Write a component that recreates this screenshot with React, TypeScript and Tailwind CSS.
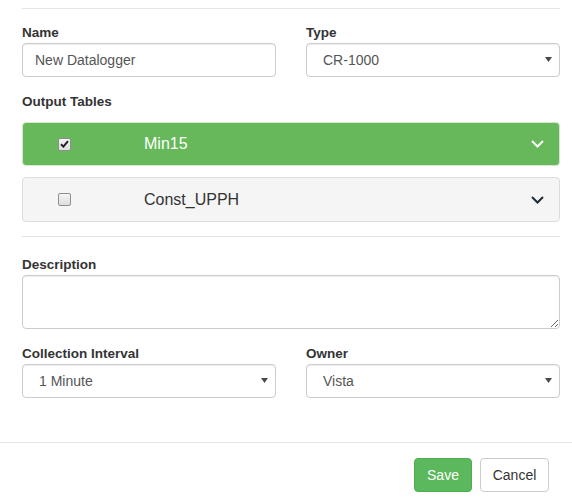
import React from "react";

const labelClass = "block text-[13.5px] font-bold leading-[20px] text-[#333]";
const controlClass =
  "h-[34px] w-full rounded-[4px] border border-[#ccc] bg-white text-[14px] text-[#555] shadow-[inset_0_1px_1px_rgba(0,0,0,0.075)] outline-none";

function FakeCheckbox({ checked }: { checked: boolean }) {
  return (
    <span className="flex h-[13px] w-[13px] items-center justify-center rounded-[2px] border border-[#8e8e8e] bg-gradient-to-b from-[#f4f4f4] to-[#dedede]">
      {checked && (
        <svg width="9" height="8" viewBox="0 0 9 8">
          <path d="M1 4.2 L3.4 6.6 L8 1.2" fill="none" stroke="#222" strokeWidth="2" />
        </svg>
      )}
    </span>
  );
}

function Chevron({ color }: { color: string }) {
  return (
    <svg width="13" height="8" viewBox="0 0 13 8">
      <path d="M1 1 L6.5 6.5 L12 1" fill="none" stroke={color} strokeWidth="2" />
    </svg>
  );
}

function TablePanel({ name, active }: { name: string; active: boolean }) {
  return (
    <div
      className={`flex items-center rounded-[4px] border ${
        active
          ? "h-[44px] border-[#d7e6d2] bg-[#67b85a] text-white"
          : "h-[45px] border-[#ddd] bg-[#f5f5f5] text-[#333]"
      }`}
    >
      <div className="flex w-[121px] pl-[35px]">
        <FakeCheckbox checked={active} />
      </div>
      <span className="flex-1 text-[16px]">{name}</span>
      <div className="pr-[15px]">
        <Chevron color={active ? "#ffffff" : "#1d2b3a"} />
      </div>
    </div>
  );
}

function SelectBox({ value, options }: { value: string; options: string[] }) {
  return (
    <div className="relative">
      <select defaultValue={value} className={`${controlClass} appearance-none pl-[16px] pr-[28px]`}>
        {options.map((o) => (
          <option key={o}>{o}</option>
        ))}
      </select>
      <svg
        className="pointer-events-none absolute right-[8px] top-[14px]"
        width="7"
        height="5"
        viewBox="0 0 7 5"
      >
        <path d="M0 0 L7 0 L3.5 5 Z" fill="#4a4a4a" />
      </svg>
    </div>
  );
}

export default function App() {
  return (
    <div className="h-[499px] w-[572px] overflow-hidden bg-white font-['Liberation_Sans',Arial,sans-serif] text-[#333]">
      <div className="pl-[22px] pr-[12px] pt-[8px]">
        <div className="h-px bg-[#e5e5e5]" />

        <div className="mt-[14px] grid grid-cols-2 gap-x-[30px]">
          <div>
            <label className={labelClass}>Name</label>
            <input className={`${controlClass} px-[12px]`} defaultValue="New Datalogger" />
          </div>
          <div>
            <label className={labelClass}>Type</label>
            <SelectBox value="CR-1000" options={["CR-1000", "CR-800", "CR-3000"]} />
          </div>
        </div>

        <label className={`${labelClass} mt-[15px]`}>Output Tables</label>
        <div className="mt-[10px] flex flex-col gap-[11px]">
          <TablePanel name="Min15" active />
          <TablePanel name="Const_UPPH" active={false} />
        </div>

        <div className="mt-[14px] h-px bg-[#e5e5e5]" />

        <label className={`${labelClass} mt-[18px]`}>Description</label>
        <textarea className={`${controlClass} block h-[54px] px-[12px] py-[6px]`} />

        <div className="mt-[15px] grid grid-cols-2 gap-x-[30px]">
          <div>
            <label className={labelClass}>Collection Interval</label>
            <SelectBox value="1 Minute" options={["1 Minute", "5 Minutes", "15 Minutes", "1 Hour"]} />
          </div>
          <div>
            <label className={labelClass}>Owner</label>
            <SelectBox value="Vista" options={["Vista", "Admin"]} />
          </div>
        </div>
      </div>

      <div className="mt-[44px] flex justify-end gap-[8px] border-t border-[#e5e5e5] pr-[23px] pt-[15px]">
        <button className="h-[34px] w-[58px] rounded-[4px] border border-[#4cae4c] bg-[#5cb85c] text-[14px] text-white">
          Save
        </button>
        <button className="h-[34px] w-[69px] rounded-[4px] border border-[#ccc] bg-white text-[14px] text-[#333]">
          Cancel
        </button>
      </div>
    </div>
  );
}
